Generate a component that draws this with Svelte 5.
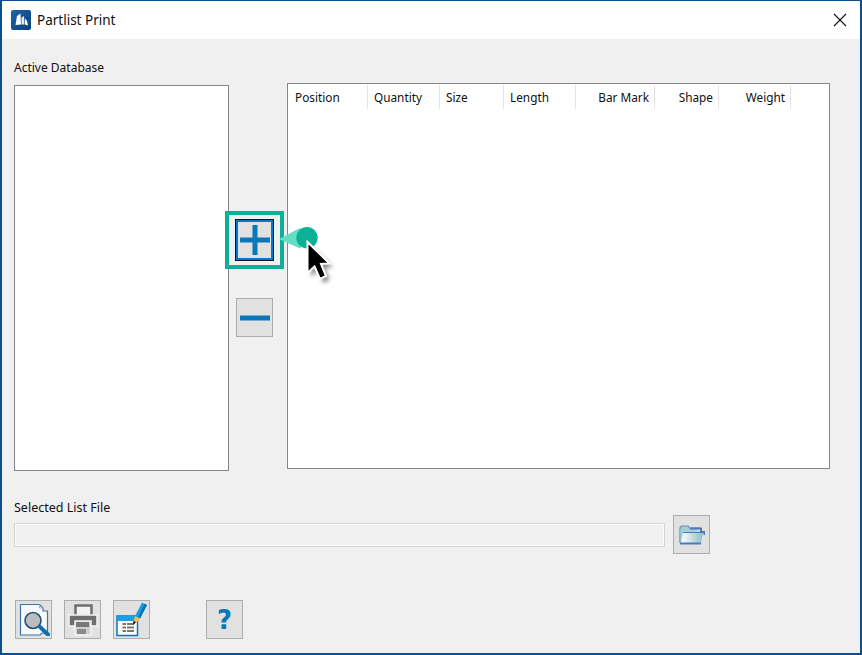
<script>
  const columns = [
    { label: 'Position', width: 80, align: 'left' },
    { label: 'Quantity', width: 72, align: 'left' },
    { label: 'Size', width: 64, align: 'left' },
    { label: 'Length', width: 72, align: 'left' },
    { label: 'Bar Mark', width: 79, align: 'right' },
    { label: 'Shape', width: 64, align: 'right' },
    { label: 'Weight', width: 72, align: 'right' }
  ];
</script>

<div class="window">
  <header class="titlebar">
    <svg class="logo" viewBox="0 0 20 20" width="20" height="20">
      <defs>
        <linearGradient id="logo-bg" x1="0" y1="0" x2="1" y2="1">
          <stop offset="0" stop-color="#1d66ad" />
          <stop offset="1" stop-color="#0b3e78" />
        </linearGradient>
      </defs>
      <rect width="20" height="20" rx="2" fill="url(#logo-bg)" />
      <path d="M4.500 15 L6 6 L9.500 3.500 L10 14.500 Z" fill="#fff" />
      <path d="M10.500 14.500 L10.500 7.500 L13 6 L13.500 14.500 Z" fill="#dbe7f3" />
      <path d="M14 14.500 L14 8.500 L16 11 L17 15.500 Z" fill="#fff" />
    </svg>
    <span class="title">Partlist Print</span>
    <svg class="close" viewBox="0 0 14 14" width="14" height="14">
      <path d="M1 1 L13 13 M13 1 L1 13" stroke="#111" stroke-width="1.1" fill="none" />
    </svg>
  </header>

  <main class="content">
    <div class="label db-label">Active Database</div>

    <div class="lists">
      <div class="panel db-panel"></div>

      <div class="transfer">
        <div class="callout-anchor">
          <button class="btn add" aria-label="Add">
            <svg viewBox="0 0 30 30" width="30" height="30">
              <path d="M0 12.500 H30 V17.500 H0 Z M12.500 0 H17.500 V30 H12.500 Z" fill="#0a78b8" />
            </svg>
          </button>
          <div class="highlight"></div>
          <svg class="pointer" viewBox="0 0 70 70" width="70" height="70">
            <defs>
              <filter id="cursor-shadow" x="-40%" y="-40%" width="180%" height="180%">
                <feGaussianBlur stdDeviation="2" />
              </filter>
            </defs>
            <path d="M6 21 L27 10 L36 20 L27 30.500 Z" fill="#62dfc4" />
            <circle cx="34" cy="19.700" r="10.700" fill="#0cb096" />
            <path d="M35 25 L35 56 L42 49.500 L47.500 62 L53.500 59 L48.500 47 L57 46.500 Z" fill="#000" opacity=".45" filter="url(#cursor-shadow)" transform="translate(3 3)" />
            <path d="M34.500 24 L34.500 55 L41.500 48.500 L47 61 L53 58 L48 46 L56.500 45.500 Z" fill="#000" stroke="#fff" stroke-width="2" />
          </svg>
        </div>
        <button class="btn remove" aria-label="Remove">
          <svg viewBox="0 0 30 30" width="30" height="30">
            <path d="M0 12.500 H30 V17.500 H0 Z" fill="#0a78b8" />
          </svg>
        </button>
      </div>

      <div class="panel table-panel">
        <div class="table-head">
          {#each columns as c}
            <div class="col" class:right={c.align === 'right'} style="width: {c.width}px">{c.label}</div>
          {/each}
        </div>
      </div>
    </div>

    <div class="label file-label">Selected List File</div>
    <div class="file-row">
      <div class="file-input"></div>
      <button class="btn" aria-label="Browse">
        <svg viewBox="0 0 26 20" width="26" height="20">
          <defs>
            <linearGradient id="folder-front" x1="0" y1="0" x2="1" y2="0">
              <stop offset="0" stop-color="#ffffff" />
              <stop offset="1" stop-color="#8fbccb" />
            </linearGradient>
          </defs>
          <path d="M1 18 V3 L2.500 1 H9 L10.500 3 H21" fill="#a8cfd8" stroke="#5d8cb8" stroke-width="1.200" />
          <path d="M1.500 4 H10 V6 H21 V16 H1.500 Z" fill="#a8cfd8" />
          <path d="M2 18 L4 8 H24 L22 18 Z" fill="url(#folder-front)" />
          <path d="M11 3.500 H22 V7 H25.500 V10" fill="none" stroke="#4a79b4" stroke-width="2" />
          <path d="M1 18.500 H22" fill="none" stroke="#4a79b4" stroke-width="2" />
          <path d="M4 7.500 H22" fill="none" stroke="#4a79b4" stroke-width="1" />
        </svg>
      </button>
    </div>

    <div class="toolbar">
      <button class="btn" aria-label="Preview">
        <svg viewBox="0 0 32 32" width="32" height="32">
          <path d="M2.500 0.500 H21.500 L25 4 V7 H29.500 V29 H24 L22 31 H2.500 Z" fill="#f7f9fb" stroke="#3f73a8" stroke-width="1.200" />
          <path d="M21.500 0.500 V4 H25" fill="none" stroke="#9db4cc" stroke-width="1" />
          <circle cx="15" cy="16.500" r="9.800" fill="#fff" />
          <circle cx="15" cy="16.500" r="8" fill="#bcbcbc" stroke="#1d4f7e" stroke-width="1.600" />
          <path d="M22 23 L30 30.500" stroke="#0c6fb0" stroke-width="4" stroke-linecap="round" />
        </svg>
      </button>
      <button class="btn" aria-label="Print">
        <svg viewBox="0 0 32 32" width="32" height="32">
          <path d="M8.500 1.500 H24.500 V12 H8.500 Z" fill="#f2f2f2" stroke="#6e6e6e" stroke-width="2.500" />
          <path d="M2 11 H30 V22 H2 Z" fill="#6e6e6e" stroke="#f5f5f5" stroke-width="1.500" />
          <path d="M8 17 H24 V31 H8 Z" fill="#cfcfcf" stroke="#f5f5f5" stroke-width="1.500" />
          <path d="M9 18 H22 V23 H9 Z" fill="#777" />
          <path d="M10 25 H19 V30 H10 Z" fill="#8a8a8a" />
        </svg>
      </button>
      <button class="btn" aria-label="Edit">
        <svg class="edit-icon" viewBox="0 0 32 32" width="32" height="32">
          <rect x="1" y="12" width="20.500" height="19.500" fill="#fff" stroke="#0a78b8" stroke-width="1.500" />
          <rect x="1" y="12" width="20.500" height="5" fill="#17a0e4" />
          <path d="M6.500 19 H18 V21 H6.500 Z M6.500 22.500 H18 V24.500 H6.500 Z M6.500 26 H18 V28 H6.500 Z" fill="#77776b" />
          <path d="M10 19 H11 V28 H10 Z" fill="#fff" />
          <path d="M19 12 L26 -1.500 L31 1 L24 14.500 Z" fill="#1f9be6" />
          <path d="M28.500 -0.200 L31 1 L24 14.500 L22 13.500 Z" fill="#0c6fb0" />
          <path d="M19 12 L24 14.500 L20.500 19 L17.500 17 Z" fill="#f4b65f" />
          <path d="M17.500 16.500 L20 18.500 L17 21 Z" fill="#111" />
        </svg>
      </button>
      <button class="btn help" aria-label="Help">
        <span>?</span>
      </button>
    </div>
  </main>
</div>

<style>
  :global(body) {
    margin: 0;
    background: #f0f0f0;
  }

  .window {
    box-sizing: border-box;
    width: 862px;
    height: 655px;
    border: 2px solid #0d4f8e;
    border-top-width: 1px;
    background: #f0f0f0;
    font-family: "Noto Sans", Tahoma, sans-serif;
    font-size: 12px;
    color: #111;
    display: flex;
    flex-direction: column;
    overflow: hidden;
  }

  .titlebar {
    height: 38px;
    flex: none;
    background: #fff;
    display: flex;
    align-items: center;
    padding: 0 13px 0 9px;
  }

  .logo {
    margin-right: 6px;
  }

  .title {
    font-size: 13.5px;
    flex: 1;
  }

  .content {
    flex: 1;
    padding: 0 0 0 12px;
    display: flex;
    flex-direction: column;
    min-height: 0;
  }

  .label {
    line-height: 16px;
  }

  .db-label {
    margin-top: 21px;
  }

  .lists {
    display: flex;
    align-items: flex-start;
    height: 388px;
    margin-top: 8px;
  }

  .panel {
    box-sizing: border-box;
    background: #fff;
    border: 1px solid #85858f;
    flex: none;
  }

  .db-panel {
    width: 215px;
    height: 386px;
    margin-top: 1px;
  }

  .table-panel {
    width: 543px;
    height: 386px;
    margin-top: -1px;
  }

  .transfer {
    width: 58px;
    flex: none;
    display: flex;
    flex-direction: column;
    align-items: flex-start;
    padding: 136px 0 0 7px;
    box-sizing: border-box;
    gap: 38px;
  }

  .callout-anchor {
    position: relative;
    width: 37px;
    height: 40px;
  }

  .btn {
    box-sizing: border-box;
    width: 37px;
    height: 39px;
    padding: 0;
    margin: 0;
    flex: none;
    background: #e1e1e1;
    border: 1px solid #adadad;
    display: flex;
    align-items: center;
    justify-content: center;
  }

  .add {
    height: 40px;
    border: 2px solid #0078d7;
    outline: 1px solid #111;
  }

  .highlight {
    position: absolute;
    left: -11px;
    top: -9px;
    width: 59px;
    height: 58px;
    box-sizing: border-box;
    border: 4px solid #0cb096;
  }

  .pointer {
    position: absolute;
    left: 37px;
    top: -2px;
    pointer-events: none;
  }

  .edit-icon {
    overflow: visible;
  }

  .table-head {
    display: flex;
    margin-top: 1px;
    font-size: 11.8px;
  }

  .col {
    box-sizing: border-box;
    height: 24px;
    padding: 0 6px;
    line-height: 24px;
    border-right: 1px solid #e5e5e5;
    white-space: nowrap;
  }

  .col:first-child {
    padding-left: 7px;
  }

  .col.right {
    text-align: right;
    padding-right: 5px;
  }

  .file-label {
    margin-top: 28px;
    font-size: 12.5px;
  }

  .file-row {
    display: flex;
    align-items: center;
    gap: 8px;
    margin-top: -1px;
  }

  .file-input {
    box-sizing: border-box;
    width: 651px;
    height: 24px;
    background: #f0f0f0;
    border: 1px solid #d4d4d4;
    box-shadow: inset 0 0 0 1px #fbfbfb;
  }

  .toolbar {
    display: flex;
    gap: 12px;
    margin-top: 46px;
    margin-left: 1px;
  }

  .help {
    margin-left: 44px;
    color: #0a78b8;
    font-family: "DejaVu Sans", sans-serif;
    font-weight: 700;
    font-size: 26px;
  }
</style>
